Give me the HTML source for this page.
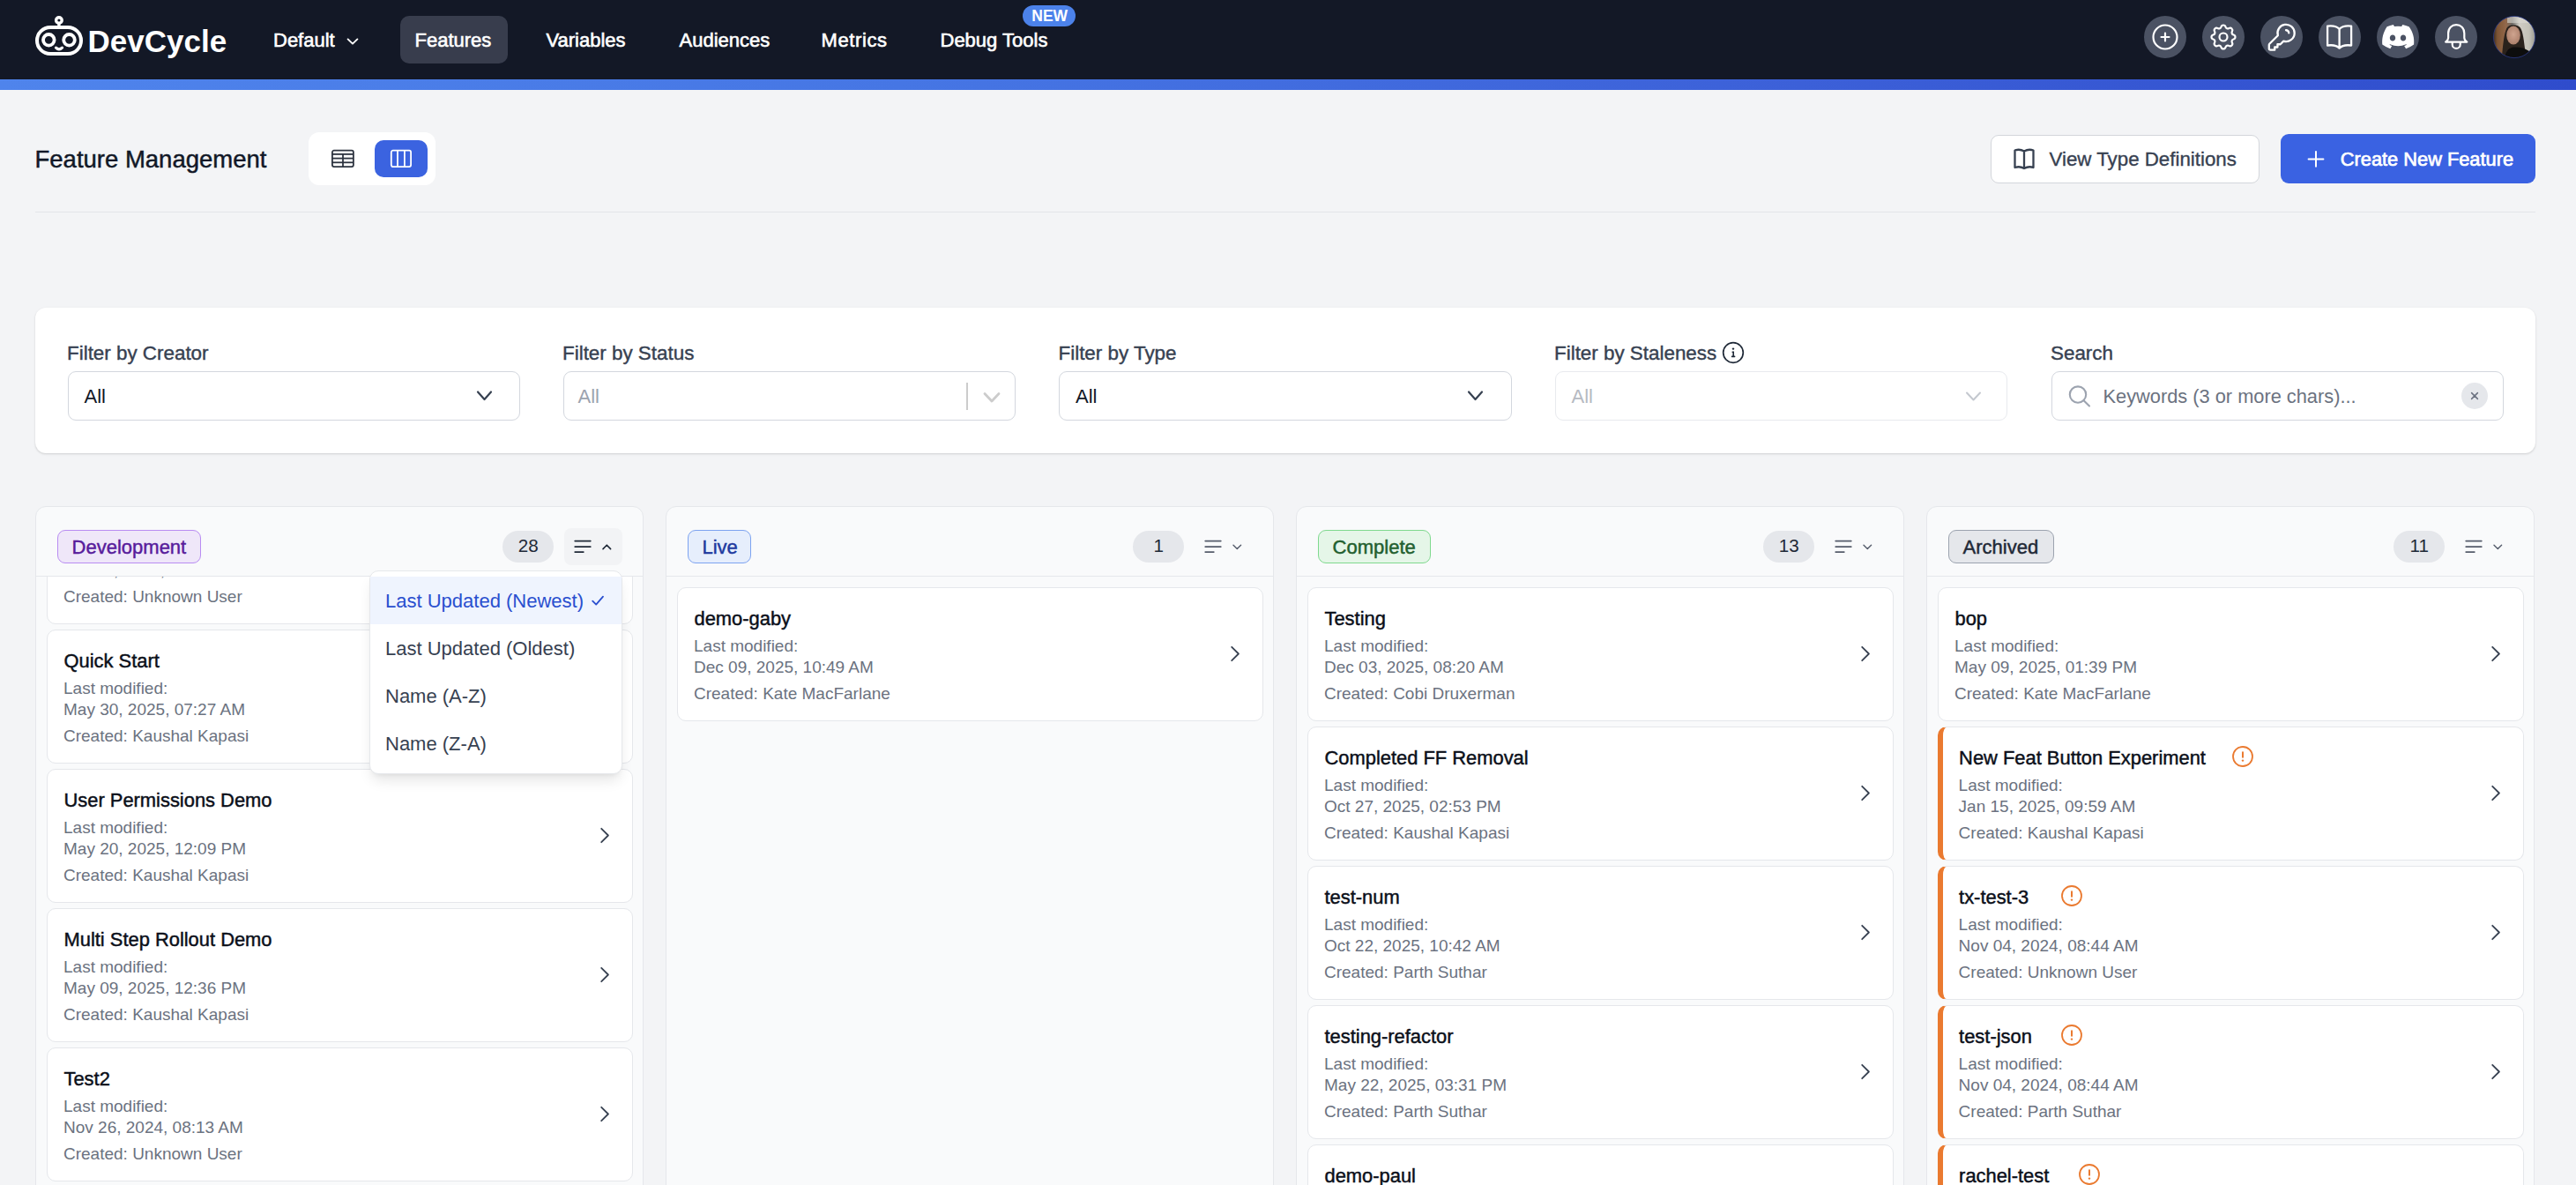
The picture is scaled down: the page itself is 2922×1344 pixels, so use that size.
<!DOCTYPE html>
<html><head><meta charset="utf-8"><title>Feature Management</title>
<style>
html,body{margin:0;padding:0;}
body{width:2922px;height:1344px;overflow:hidden;position:relative;background:#f3f4f6;font-family:"Liberation Sans", sans-serif;}
.t{position:absolute;white-space:nowrap;}
.r{position:absolute;}
svg.r{overflow:visible;}
</style></head><body>
<div class="r" style="left:0.00px;top:0.00px;width:2922.00px;height:90.00px;background:#131826;border-radius:0px;"></div>
<div class="r" style="left:0.00px;top:90.00px;width:2922.00px;height:12.00px;background:linear-gradient(90deg,#4f84ec 0%,#4676e4 35%,#3c60d8 70%,#2f4ccc 100%);border-radius:0px;"></div>
<svg class="r" style="left:0.00px;top:0.00px;" width="110" height="80" viewBox="0 0 110 80"><g fill="none" stroke="#fff" stroke-width="4">
<rect x="42" y="31" width="50" height="30" rx="15" ry="15"/>
<circle cx="55.3" cy="45.3" r="6.3" stroke-width="3.8"/>
<circle cx="78.5" cy="45.3" r="6.3" stroke-width="3.8"/>
<path d="M63.5 54.2 Q67 57.6 70.5 54.2" stroke-width="3.2" stroke-linecap="round"/>
<circle cx="66.9" cy="23" r="3.3" stroke-width="3.4"/>
<line x1="66.9" y1="26" x2="66.9" y2="31" stroke-width="3.4"/>
</g></svg>
<div class="t" style="left:99.50px;top:28.78px;font-size:35px;line-height:35px;font-weight:700;color:#fff;letter-spacing:0px;">DevCycle</div>
<div class="t" style="left:310.00px;top:34.63px;font-size:22px;line-height:22px;font-weight:400;color:#fff;letter-spacing:0px;-webkit-text-stroke:0.6px #fff;">Default</div>
<svg class="r" style="left:392.00px;top:40.00px;" width="16" height="14" viewBox="0 0 16 14"><path d="M2.6 4.4 L8 9.6 L13.4 4.4" fill="none" stroke="#fff" stroke-width="1.9" stroke-linecap="round" stroke-linejoin="round"/></svg>
<div class="r" style="left:454.00px;top:18.00px;width:122.00px;height:54.00px;background:#383d4d;border-radius:10px;"></div>
<div class="t" style="left:470.50px;top:34.63px;font-size:22px;line-height:22px;font-weight:400;color:#fff;letter-spacing:0px;-webkit-text-stroke:0.6px #fff;">Features</div>
<div class="t" style="left:619.50px;top:34.63px;font-size:22px;line-height:22px;font-weight:400;color:#fff;letter-spacing:0px;-webkit-text-stroke:0.6px #fff;">Variables</div>
<div class="t" style="left:770.50px;top:34.63px;font-size:22px;line-height:22px;font-weight:400;color:#fff;letter-spacing:0px;-webkit-text-stroke:0.6px #fff;">Audiences</div>
<div class="t" style="left:931.50px;top:34.63px;font-size:22px;line-height:22px;font-weight:400;color:#fff;letter-spacing:0.6px;-webkit-text-stroke:0.6px #fff;">Metrics</div>
<div class="t" style="left:1066.50px;top:34.63px;font-size:22px;line-height:22px;font-weight:400;color:#fff;letter-spacing:0px;-webkit-text-stroke:0.6px #fff;">Debug Tools</div>
<div class="r" style="left:1160.00px;top:6.00px;width:60.00px;height:24.00px;background:#4c82ea;border-radius:12px;"></div>
<div class="t" style="left:1170.30px;top:10.39px;font-size:17.5px;line-height:17.5px;font-weight:700;color:#fff;letter-spacing:0px;">NEW</div>
<div class="r" style="left:2432.00px;top:18.00px;width:48.00px;height:48.00px;background:#4b5263;border-radius:24px;"></div>
<div class="r" style="left:2498.00px;top:18.00px;width:48.00px;height:48.00px;background:#4b5263;border-radius:24px;"></div>
<div class="r" style="left:2564.00px;top:18.00px;width:48.00px;height:48.00px;background:#4b5263;border-radius:24px;"></div>
<div class="r" style="left:2630.00px;top:18.00px;width:48.00px;height:48.00px;background:#4b5263;border-radius:24px;"></div>
<div class="r" style="left:2696.00px;top:18.00px;width:48.00px;height:48.00px;background:#4b5263;border-radius:24px;"></div>
<div class="r" style="left:2762.00px;top:18.00px;width:48.00px;height:48.00px;background:#4b5263;border-radius:24px;"></div>
<svg class="r" style="left:2438.00px;top:24.00px" width="36" height="36" viewBox="0 0 24 24" fill="none" stroke="#fff" stroke-width="1.45" stroke-linecap="round" stroke-linejoin="round"><path d="M12 9v6m3-3H9m12 0a9 9 0 11-18 0 9 9 0 0118 0z"/></svg>
<svg class="r" style="left:2504.00px;top:24.00px" width="36" height="36" viewBox="0 0 24 24" fill="none" stroke="#fff" stroke-width="1.45" stroke-linecap="round" stroke-linejoin="round"><path d="M10.325 4.317c.426-1.756 2.924-1.756 3.35 0a1.724 1.724 0 002.573 1.066c1.543-.94 3.31.826 2.37 2.37a1.724 1.724 0 001.065 2.572c1.756.426 1.756 2.924 0 3.35a1.724 1.724 0 00-1.066 2.573c.94 1.543-.826 3.31-2.37 2.37a1.724 1.724 0 00-2.572 1.065c-.426 1.756-2.924 1.756-3.35 0a1.724 1.724 0 00-2.573-1.066c-1.543.94-3.31-.826-2.37-2.37a1.724 1.724 0 00-1.065-2.572c-1.756-.426-1.756-2.924 0-3.35a1.724 1.724 0 001.066-2.573c-.94-1.543.826-3.31 2.37-2.37.996.608 2.296.07 2.572-1.065zM15 12a3 3 0 11-6 0 3 3 0 016 0z"/></svg>
<svg class="r" style="left:2568.75px;top:22.75px" width="38.5" height="38.5" viewBox="0 0 24 24" fill="none" stroke="#fff" stroke-width="1.45" stroke-linecap="round" stroke-linejoin="round"><path d="M15 7a2 2 0 012 2m4 0a6 6 0 01-7.743 5.743L11 17H9v2H7v2H4a1 1 0 01-1-1v-2.586a1 1 0 01.293-.707l5.964-5.964A6 6 0 1121 9z"/></svg>
<svg class="r" style="left:2636.00px;top:26.00px;" width="36" height="32" viewBox="0 0 36 32"><path d="M4.1 3.6 C9.5 2.9 14.5 3.6 17.6 7 V28.6 C14.5 25.3 9.5 24.8 4.1 25.5 Z M17.6 7 C20.7 3.6 25.7 2.9 31.1 3.6 V25.5 C25.7 24.8 20.7 25.3 17.6 28.6" fill="none" stroke="#fff" stroke-width="2.3" stroke-linejoin="round"/></svg>
<svg class="r" style="left:2702.00px;top:28.00px;" width="36" height="28" viewBox="0 0 36 28"><path fill="#fff" d="M30.5 2.3A29.7 29.7 0 0 0 23.2 0c-.3.6-.7 1.4-1 2a27.6 27.6 0 0 0-8.3 0c-.3-.6-.7-1.4-1-2a29.6 29.6 0 0 0-7.3 2.3C1 9.2-.3 16 .3 22.6a29.9 29.9 0 0 0 9 4.6c.7-1 1.4-2 2-3.1a19.4 19.4 0 0 1-2.9-1.4l.7-.5a21.3 21.3 0 0 0 18.2 0l.7.5c-.9.5-1.9 1-2.9 1.4.6 1.1 1.3 2.1 2 3.1a29.8 29.8 0 0 0 9-4.6c.8-7.7-1.2-14.4-5.5-20.3zM12 18.6c-1.8 0-3.2-1.6-3.2-3.6s1.4-3.6 3.2-3.6 3.3 1.6 3.2 3.6c0 2-1.4 3.6-3.2 3.6zm12 0c-1.8 0-3.2-1.6-3.2-3.6s1.4-3.6 3.2-3.6 3.3 1.6 3.2 3.6c0 2-1.4 3.6-3.2 3.6z"/></svg>
<svg class="r" style="left:2770.00px;top:26.00px;" width="32" height="34" viewBox="0 0 32 34"><path d="M7.1 17 V11.8 C7.1 5.9 11.1 2.1 16.2 2.1 C21.3 2.1 25.3 5.9 25.3 11.8 V17 C25.3 19.2 26.8 20.3 28.3 21.6 H4.1 C5.6 20.3 7.1 19.2 7.1 17 Z M11.7 22 V24.4 A4.5 4.5 0 0 0 20.7 24.4 V22" fill="none" stroke="#fff" stroke-width="2.2" stroke-linejoin="round"/></svg>
<svg class="r" style="left:2828.00px;top:18.00px;" width="48" height="48" viewBox="0 0 48 48"><defs><clipPath id="avc"><circle cx="24" cy="24" r="23.6"/></clipPath>
<linearGradient id="avbg" x1="0" y1="0" x2="1" y2="0"><stop offset="0" stop-color="#3a2c22"/><stop offset="0.1" stop-color="#7d5434"/><stop offset="0.3" stop-color="#93684a"/><stop offset="0.45" stop-color="#6d6a66"/><stop offset="0.62" stop-color="#cfccc4"/><stop offset="0.85" stop-color="#c4c2b8"/><stop offset="1" stop-color="#9c9a90"/></linearGradient>
<radialGradient id="avface" cx="0.5" cy="0.45" r="0.6"><stop offset="0" stop-color="#cfa48f"/><stop offset="1" stop-color="#a97d68"/></radialGradient></defs>
<filter id="avblur"><feGaussianBlur stdDeviation="0.7"/></filter><g clip-path="url(#avc)"><g filter="url(#avblur)"><rect width="48" height="48" fill="url(#avbg)"/>
<rect x="16" y="-2" width="30" height="10" fill="#dcdad3" opacity="0.6"/>
<path d="M10 48 C11 32 13 16 16.5 12.5 C20 9.5 27 9.5 30.5 13 C34 17 35 30 36.5 40 L39 48 Z" fill="#2a211c"/>
<ellipse cx="23" cy="22" rx="7.8" ry="10.5" fill="url(#avface)"/>
<path d="M13 48 C14 40 18 36 24 35.5 C32 35 40 38 46 44 L46 48 Z" fill="#0c0c0b"/></g></g>
<circle cx="24" cy="24" r="23.6" fill="none" stroke="#2b3a86" stroke-width="0.8"/></svg>
<div class="t" style="left:39.50px;top:166.64px;font-size:27.5px;line-height:27.5px;font-weight:400;color:#111827;letter-spacing:0px;-webkit-text-stroke:0.45px #111827;">Feature Management</div>
<div class="r" style="left:350.00px;top:150.00px;width:144.00px;height:60.00px;background:#fff;border-radius:12px;"></div>
<div class="r" style="left:425.00px;top:159.00px;width:60.00px;height:42.00px;background:#3b63e0;border-radius:10px;"></div>
<svg class="r" style="left:370.00px;top:165.00px;" width="36" height="30" viewBox="0 0 36 30"><g fill="none" stroke="#2d3440" stroke-width="1.8"><rect x="6.9" y="5.7" width="24" height="18.4" rx="2"/><line x1="6.9" y1="9.9" x2="30.9" y2="9.9"/><line x1="6.9" y1="14.6" x2="30.9" y2="14.6"/><line x1="6.9" y1="19.3" x2="30.9" y2="19.3"/><line x1="19" y1="9.9" x2="19" y2="24.1"/></g></svg>
<svg class="r" style="left:436.00px;top:165.00px;" width="36" height="30" viewBox="0 0 36 30"><g fill="none" stroke="#fff" stroke-width="1.8"><rect x="7.8" y="5.7" width="22.3" height="18.4" rx="2"/><line x1="15" y1="5.7" x2="15" y2="24.1"/><line x1="22.9" y1="5.7" x2="22.9" y2="24.1"/></g></svg>
<div class="r" style="left:40.00px;top:239.50px;width:2836.00px;height:1.50px;background:#e3e5e9;border-radius:0px;"></div>
<div class="r" style="left:2257.50px;top:152.50px;width:305.00px;height:55.00px;background:#fff;border-radius:9px;border:1.5px solid #d3d6db;box-sizing:border-box;"></div>
<svg class="r" style="left:2282.00px;top:166.00px;" width="30" height="28" viewBox="0 0 30 28"><path d="M3.5 4.5 C7 3.3 10.5 3.5 14 5.5 V25 C10.5 23 7 22.8 3.5 24 Z M14 5.5 C17.5 3.5 21 3.3 24.5 4.5 V24 C21 22.8 17.5 23 14 25" fill="none" stroke="#374151" stroke-width="2.3" stroke-linejoin="round"/></svg>
<div class="t" style="left:2324.50px;top:169.58px;font-size:22.3px;line-height:22.3px;font-weight:400;color:#374151;letter-spacing:0px;-webkit-text-stroke:0.35px #374151;">View Type Definitions</div>
<div class="r" style="left:2587.00px;top:152.00px;width:289.00px;height:56.00px;background:#3a62e2;border-radius:9px;"></div>
<svg class="r" style="left:2614.00px;top:167.00px;" width="26" height="26" viewBox="0 0 26 26"><path d="M13 5 V21.8 M4.6 13.4 H21.4" stroke="#fff" stroke-width="2" stroke-linecap="round"/></svg>
<div class="t" style="left:2654.80px;top:170.00px;font-size:21.8px;line-height:21.8px;font-weight:400;color:#fff;letter-spacing:0px;-webkit-text-stroke:0.7px #fff;">Create New Feature</div>
<div class="r" style="left:40.00px;top:349.00px;width:2836.00px;height:165.00px;background:#fff;border-radius:12px;box-shadow:0 1px 3px rgba(0,0,0,0.10),0 1px 2px rgba(0,0,0,0.06);"></div>
<div class="t" style="left:76.00px;top:389.80px;font-size:22.4px;line-height:22.4px;font-weight:400;color:#374151;letter-spacing:0px;-webkit-text-stroke:0.4px #374151;">Filter by Creator</div>
<div class="t" style="left:638.00px;top:389.80px;font-size:22.4px;line-height:22.4px;font-weight:400;color:#374151;letter-spacing:0px;-webkit-text-stroke:0.4px #374151;">Filter by Status</div>
<div class="t" style="left:1200.50px;top:389.80px;font-size:22.4px;line-height:22.4px;font-weight:400;color:#374151;letter-spacing:0px;-webkit-text-stroke:0.4px #374151;">Filter by Type</div>
<div class="t" style="left:1763.00px;top:389.80px;font-size:22.4px;line-height:22.4px;font-weight:400;color:#374151;letter-spacing:0px;-webkit-text-stroke:0.4px #374151;">Filter by Staleness</div>
<div class="t" style="left:2326.00px;top:389.80px;font-size:22.4px;line-height:22.4px;font-weight:400;color:#374151;letter-spacing:0px;-webkit-text-stroke:0.4px #374151;">Search</div>
<div class="r" style="left:76.50px;top:421.00px;width:513.50px;height:55.50px;background:#fff;border-radius:9px;border:1.5px solid #d3d7de;box-sizing:border-box;"></div>
<div class="t" style="left:95.50px;top:438.63px;font-size:22px;line-height:22px;font-weight:400;color:#111827;letter-spacing:0px;">All</div>
<svg class="r" style="left:538.50px;top:441.00px;" width="21" height="16" viewBox="0 0 21 16"><path d="M3 3.5 L10.5 12 L18 3.5" fill="none" stroke="#374151" stroke-width="2.2" stroke-linecap="round" stroke-linejoin="round"/></svg>
<div class="r" style="left:638.50px;top:421.00px;width:513.50px;height:55.50px;background:#fff;border-radius:9px;border:1.5px solid #d3d7de;box-sizing:border-box;"></div>
<div class="t" style="left:655.50px;top:439.13px;font-size:22px;line-height:22px;font-weight:400;color:#9ca3af;letter-spacing:0px;">All</div>
<div class="r" style="left:1095.50px;top:434.00px;width:2.00px;height:31.00px;background:#cccccc;border-radius:0px;"></div>
<svg class="r" style="left:1114.00px;top:443.00px;" width="22" height="16" viewBox="0 0 22 16"><path d="M3 3.5 L11.0 12 L19 3.5" fill="none" stroke="#cccccc" stroke-width="2.8" stroke-linecap="round" stroke-linejoin="round"/></svg>
<div class="r" style="left:1201.00px;top:421.00px;width:513.50px;height:55.50px;background:#fff;border-radius:9px;border:1.5px solid #d3d7de;box-sizing:border-box;"></div>
<div class="t" style="left:1220.00px;top:438.63px;font-size:22px;line-height:22px;font-weight:400;color:#111827;letter-spacing:0px;">All</div>
<svg class="r" style="left:1663.00px;top:441.00px;" width="21" height="16" viewBox="0 0 21 16"><path d="M3 3.5 L10.5 12 L18 3.5" fill="none" stroke="#374151" stroke-width="2.2" stroke-linecap="round" stroke-linejoin="round"/></svg>
<div class="r" style="left:1763.50px;top:421.00px;width:513.50px;height:55.50px;background:#fff;border-radius:9px;border:1.5px solid #e8eaee;box-sizing:border-box;"></div>
<div class="t" style="left:1782.50px;top:439.13px;font-size:22px;line-height:22px;font-weight:400;color:#b6bac2;letter-spacing:0px;">All</div>
<svg class="r" style="left:2227.50px;top:441.50px;" width="21" height="15.5" viewBox="0 0 21 15.5"><path d="M3 3.5 L10.5 11.5 L18 3.5" fill="none" stroke="#c4c8cf" stroke-width="2" stroke-linecap="round" stroke-linejoin="round"/></svg>
<svg class="r" style="left:1952.00px;top:386.00px;" width="28" height="28" viewBox="0 0 28 28"><g fill="none" stroke="#1f2937" stroke-width="1.7"><circle cx="14" cy="14" r="11.3"/></g><path d="M13.2 13.2 H14.2 V18.4 M12.6 18.4 H15.6" fill="none" stroke="#1f2937" stroke-width="1.6" stroke-linecap="round"/><circle cx="14" cy="9.6" r="1.2" fill="#1f2937"/></svg>
<div class="r" style="left:2326.50px;top:421.00px;width:513.50px;height:55.50px;background:#fff;border-radius:9px;border:1.5px solid #d3d7de;box-sizing:border-box;"></div>
<svg class="r" style="left:2344.00px;top:435.00px;" width="30" height="30" viewBox="0 0 30 30"><g fill="none" stroke="#9ca3af" stroke-width="2.1" stroke-linecap="round"><circle cx="13" cy="12.6" r="9.2"/><line x1="19.6" y1="19.2" x2="26" y2="25.5"/></g></svg>
<div class="t" style="left:2385.50px;top:438.80px;font-size:21.8px;line-height:21.8px;font-weight:400;color:#6b7280;letter-spacing:0px;">Keywords (3 or more chars)...</div>
<div class="r" style="left:2792.00px;top:434.00px;width:30.00px;height:30.00px;background:#e5e7eb;border-radius:15px;"></div>
<svg class="r" style="left:2799.00px;top:441.00px;" width="16" height="16" viewBox="0 0 16 16"><path d="M4.6 4.6 L11.4 11.4 M11.4 4.6 L4.6 11.4" stroke="#6b7280" stroke-width="1.5" stroke-linecap="round"/></svg>
<div class="r" style="left:40.40px;top:573.50px;width:690.00px;height:826.50px;background:#f9fafb;border-radius:12px;border:1.5px solid #e5e7eb;box-sizing:border-box;"></div>
<div class="r" style="left:40.40px;top:652.50px;width:690.00px;height:1.50px;background:#e5e7eb;border-radius:0px;"></div>
<div class="r" style="left:65.30px;top:601.00px;width:163.10px;height:37.50px;background:#efe7f9;border-radius:9px;border:1.5px solid #b98cf2;box-sizing:border-box;"></div>
<div class="t" style="left:81.60px;top:610.13px;font-size:22px;line-height:22px;font-weight:400;color:#581c9c;letter-spacing:0px;-webkit-text-stroke:0.45px #581c9c;">Development</div>
<div class="r" style="left:570.00px;top:602.00px;width:58.00px;height:36.00px;background:#e5e7eb;border-radius:18px;"></div>
<div class="t" style="left:599.30px;top:609.10px;font-size:20.6px;line-height:20.6px;font-weight:400;color:#1f2937;letter-spacing:0px;transform:translateX(-50%);">28</div>
<div class="r" style="left:640.00px;top:599.00px;width:66.00px;height:42.00px;background:#f2f3f5;border-radius:8px;"></div>
<svg class="r" style="left:649.00px;top:609.00px;" width="24" height="22" viewBox="0 0 24 22"><g stroke="#1f2937" stroke-width="1.75" stroke-linecap="round"><line x1="3.2" y1="4.5" x2="20.8" y2="4.5"/><line x1="3.2" y1="11.1" x2="20.8" y2="11.1"/><line x1="3.2" y1="17" x2="12.8" y2="17"/></g></svg>
<svg class="r" style="left:681.00px;top:613.00px;" width="14" height="14" viewBox="0 0 14 14"><path d="M3 9.6 L7.3 5.2 L11.6 9.6" fill="none" stroke="#1f2937" stroke-width="1.6" stroke-linecap="round" stroke-linejoin="round"/></svg>
<div class="r" style="left:755.40px;top:573.50px;width:690.00px;height:826.50px;background:#f9fafb;border-radius:12px;border:1.5px solid #e5e7eb;box-sizing:border-box;"></div>
<div class="r" style="left:755.40px;top:652.50px;width:690.00px;height:1.50px;background:#e5e7eb;border-radius:0px;"></div>
<div class="r" style="left:780.20px;top:601.00px;width:71.60px;height:37.50px;background:#e6eefc;border-radius:9px;border:1.5px solid #7da3f0;box-sizing:border-box;"></div>
<div class="t" style="left:796.50px;top:610.13px;font-size:22px;line-height:22px;font-weight:400;color:#1e3a9f;letter-spacing:0px;-webkit-text-stroke:0.45px #1e3a9f;">Live</div>
<div class="r" style="left:1285.00px;top:602.00px;width:58.00px;height:36.00px;background:#e5e7eb;border-radius:18px;"></div>
<div class="t" style="left:1314.30px;top:609.10px;font-size:20.6px;line-height:20.6px;font-weight:400;color:#1f2937;letter-spacing:0px;transform:translateX(-50%);">1</div>
<svg class="r" style="left:1364.00px;top:609.00px;" width="24" height="22" viewBox="0 0 24 22"><g stroke="#555c6b" stroke-width="1.75" stroke-linecap="round"><line x1="3.2" y1="4.5" x2="20.8" y2="4.5"/><line x1="3.2" y1="11.1" x2="20.8" y2="11.1"/><line x1="3.2" y1="17" x2="12.8" y2="17"/></g></svg>
<svg class="r" style="left:1396.00px;top:613.00px;" width="14" height="14" viewBox="0 0 14 14"><path d="M3 5.2 L7.3 9.4 L11.6 5.2" fill="none" stroke="#555c6b" stroke-width="1.4" stroke-linecap="round" stroke-linejoin="round"/></svg>
<div class="r" style="left:1470.40px;top:573.50px;width:690.00px;height:826.50px;background:#f9fafb;border-radius:12px;border:1.5px solid #e5e7eb;box-sizing:border-box;"></div>
<div class="r" style="left:1470.40px;top:652.50px;width:690.00px;height:1.50px;background:#e5e7eb;border-radius:0px;"></div>
<div class="r" style="left:1495.30px;top:601.00px;width:127.50px;height:37.50px;background:#e5f6e8;border-radius:9px;border:1.5px solid #7fd98e;box-sizing:border-box;"></div>
<div class="t" style="left:1511.60px;top:610.13px;font-size:22px;line-height:22px;font-weight:400;color:#22602f;letter-spacing:0px;-webkit-text-stroke:0.45px #22602f;">Complete</div>
<div class="r" style="left:2000.00px;top:602.00px;width:58.00px;height:36.00px;background:#e5e7eb;border-radius:18px;"></div>
<div class="t" style="left:2029.30px;top:609.10px;font-size:20.6px;line-height:20.6px;font-weight:400;color:#1f2937;letter-spacing:0px;transform:translateX(-50%);">13</div>
<svg class="r" style="left:2079.00px;top:609.00px;" width="24" height="22" viewBox="0 0 24 22"><g stroke="#555c6b" stroke-width="1.75" stroke-linecap="round"><line x1="3.2" y1="4.5" x2="20.8" y2="4.5"/><line x1="3.2" y1="11.1" x2="20.8" y2="11.1"/><line x1="3.2" y1="17" x2="12.8" y2="17"/></g></svg>
<svg class="r" style="left:2111.00px;top:613.00px;" width="14" height="14" viewBox="0 0 14 14"><path d="M3 5.2 L7.3 9.4 L11.6 5.2" fill="none" stroke="#555c6b" stroke-width="1.4" stroke-linecap="round" stroke-linejoin="round"/></svg>
<div class="r" style="left:2185.40px;top:573.50px;width:690.00px;height:826.50px;background:#f9fafb;border-radius:12px;border:1.5px solid #e5e7eb;box-sizing:border-box;"></div>
<div class="r" style="left:2185.40px;top:652.50px;width:690.00px;height:1.50px;background:#e5e7eb;border-radius:0px;"></div>
<div class="r" style="left:2210.30px;top:601.00px;width:119.40px;height:37.50px;background:#e5e7eb;border-radius:9px;border:1.5px solid #9ca3af;box-sizing:border-box;"></div>
<div class="t" style="left:2226.60px;top:610.13px;font-size:22px;line-height:22px;font-weight:400;color:#1f2937;letter-spacing:0px;-webkit-text-stroke:0.45px #1f2937;">Archived</div>
<div class="r" style="left:2715.00px;top:602.00px;width:58.00px;height:36.00px;background:#e5e7eb;border-radius:18px;"></div>
<div class="t" style="left:2744.30px;top:609.10px;font-size:20.6px;line-height:20.6px;font-weight:400;color:#1f2937;letter-spacing:0px;transform:translateX(-50%);">11</div>
<svg class="r" style="left:2794.00px;top:609.00px;" width="24" height="22" viewBox="0 0 24 22"><g stroke="#555c6b" stroke-width="1.75" stroke-linecap="round"><line x1="3.2" y1="4.5" x2="20.8" y2="4.5"/><line x1="3.2" y1="11.1" x2="20.8" y2="11.1"/><line x1="3.2" y1="17" x2="12.8" y2="17"/></g></svg>
<svg class="r" style="left:2826.00px;top:613.00px;" width="14" height="14" viewBox="0 0 14 14"><path d="M3 5.2 L7.3 9.4 L11.6 5.2" fill="none" stroke="#555c6b" stroke-width="1.4" stroke-linecap="round" stroke-linejoin="round"/></svg>
<div class="r" style="left:0;top:653.5px;width:2922px;height:690.5px;overflow:hidden"><div class="r" style="left:0;top:-653.5px;width:2922px;height:1344px">
<div class="r" style="left:52.90px;top:556.20px;width:665.00px;height:151.50px;background:#fff;border-radius:10px;border:1.5px solid #e5e7eb;box-sizing:border-box;"></div>
<div class="t" style="left:72.50px;top:580.51px;font-size:21.9px;line-height:21.9px;font-weight:400;color:#0b0f19;letter-spacing:0px;-webkit-text-stroke:0.45px #0b0f19;">Onboarding Flow</div>
<div class="t" style="left:72.00px;top:612.84px;font-size:19.0px;line-height:19.0px;font-weight:400;color:#6b7280;letter-spacing:0px;">Last modified:</div>
<div class="t" style="left:72.00px;top:636.94px;font-size:19.0px;line-height:19.0px;font-weight:400;color:#6b7280;letter-spacing:0px;">Jun 02, 2025, 09:14 AM</div>
<div class="t" style="left:72.00px;top:667.24px;font-size:19.0px;line-height:19.0px;font-weight:400;color:#6b7280;letter-spacing:0px;">Created: Unknown User</div>
<svg class="r" style="left:678.30px;top:621.00px;" width="18" height="21" viewBox="0 0 18 21"><path d="M4.2 2.8 L11.9 10.5 L4.2 18.2" fill="none" stroke="#374151" stroke-width="1.8" stroke-linecap="round" stroke-linejoin="round"/></svg>
<div class="r" style="left:52.90px;top:714.20px;width:665.00px;height:151.50px;background:#fff;border-radius:10px;border:1.5px solid #e5e7eb;box-sizing:border-box;"></div>
<div class="t" style="left:72.50px;top:738.51px;font-size:21.9px;line-height:21.9px;font-weight:400;color:#0b0f19;letter-spacing:0px;-webkit-text-stroke:0.45px #0b0f19;">Quick Start</div>
<div class="t" style="left:72.00px;top:770.84px;font-size:19.0px;line-height:19.0px;font-weight:400;color:#6b7280;letter-spacing:0px;">Last modified:</div>
<div class="t" style="left:72.00px;top:794.94px;font-size:19.0px;line-height:19.0px;font-weight:400;color:#6b7280;letter-spacing:0px;">May 30, 2025, 07:27 AM</div>
<div class="t" style="left:72.00px;top:825.24px;font-size:19.0px;line-height:19.0px;font-weight:400;color:#6b7280;letter-spacing:0px;">Created: Kaushal Kapasi</div>
<svg class="r" style="left:678.30px;top:779.00px;" width="18" height="21" viewBox="0 0 18 21"><path d="M4.2 2.8 L11.9 10.5 L4.2 18.2" fill="none" stroke="#374151" stroke-width="1.8" stroke-linecap="round" stroke-linejoin="round"/></svg>
<div class="r" style="left:52.90px;top:872.20px;width:665.00px;height:151.50px;background:#fff;border-radius:10px;border:1.5px solid #e5e7eb;box-sizing:border-box;"></div>
<div class="t" style="left:72.50px;top:896.51px;font-size:21.9px;line-height:21.9px;font-weight:400;color:#0b0f19;letter-spacing:0px;-webkit-text-stroke:0.45px #0b0f19;">User Permissions Demo</div>
<div class="t" style="left:72.00px;top:928.84px;font-size:19.0px;line-height:19.0px;font-weight:400;color:#6b7280;letter-spacing:0px;">Last modified:</div>
<div class="t" style="left:72.00px;top:952.94px;font-size:19.0px;line-height:19.0px;font-weight:400;color:#6b7280;letter-spacing:0px;">May 20, 2025, 12:09 PM</div>
<div class="t" style="left:72.00px;top:983.24px;font-size:19.0px;line-height:19.0px;font-weight:400;color:#6b7280;letter-spacing:0px;">Created: Kaushal Kapasi</div>
<svg class="r" style="left:678.30px;top:937.00px;" width="18" height="21" viewBox="0 0 18 21"><path d="M4.2 2.8 L11.9 10.5 L4.2 18.2" fill="none" stroke="#374151" stroke-width="1.8" stroke-linecap="round" stroke-linejoin="round"/></svg>
<div class="r" style="left:52.90px;top:1030.20px;width:665.00px;height:151.50px;background:#fff;border-radius:10px;border:1.5px solid #e5e7eb;box-sizing:border-box;"></div>
<div class="t" style="left:72.50px;top:1054.51px;font-size:21.9px;line-height:21.9px;font-weight:400;color:#0b0f19;letter-spacing:0px;-webkit-text-stroke:0.45px #0b0f19;">Multi Step Rollout Demo</div>
<div class="t" style="left:72.00px;top:1086.84px;font-size:19.0px;line-height:19.0px;font-weight:400;color:#6b7280;letter-spacing:0px;">Last modified:</div>
<div class="t" style="left:72.00px;top:1110.93px;font-size:19.0px;line-height:19.0px;font-weight:400;color:#6b7280;letter-spacing:0px;">May 09, 2025, 12:36 PM</div>
<div class="t" style="left:72.00px;top:1141.24px;font-size:19.0px;line-height:19.0px;font-weight:400;color:#6b7280;letter-spacing:0px;">Created: Kaushal Kapasi</div>
<svg class="r" style="left:678.30px;top:1095.00px;" width="18" height="21" viewBox="0 0 18 21"><path d="M4.2 2.8 L11.9 10.5 L4.2 18.2" fill="none" stroke="#374151" stroke-width="1.8" stroke-linecap="round" stroke-linejoin="round"/></svg>
<div class="r" style="left:52.90px;top:1188.20px;width:665.00px;height:151.50px;background:#fff;border-radius:10px;border:1.5px solid #e5e7eb;box-sizing:border-box;"></div>
<div class="t" style="left:72.50px;top:1212.51px;font-size:21.9px;line-height:21.9px;font-weight:400;color:#0b0f19;letter-spacing:0px;-webkit-text-stroke:0.45px #0b0f19;">Test2</div>
<div class="t" style="left:72.00px;top:1244.84px;font-size:19.0px;line-height:19.0px;font-weight:400;color:#6b7280;letter-spacing:0px;">Last modified:</div>
<div class="t" style="left:72.00px;top:1268.93px;font-size:19.0px;line-height:19.0px;font-weight:400;color:#6b7280;letter-spacing:0px;">Nov 26, 2024, 08:13 AM</div>
<div class="t" style="left:72.00px;top:1299.24px;font-size:19.0px;line-height:19.0px;font-weight:400;color:#6b7280;letter-spacing:0px;">Created: Unknown User</div>
<svg class="r" style="left:678.30px;top:1253.00px;" width="18" height="21" viewBox="0 0 18 21"><path d="M4.2 2.8 L11.9 10.5 L4.2 18.2" fill="none" stroke="#374151" stroke-width="1.8" stroke-linecap="round" stroke-linejoin="round"/></svg>
</div></div>
<div class="r" style="left:0;top:653.5px;width:2922px;height:690.5px;overflow:hidden"><div class="r" style="left:0;top:-653.5px;width:2922px;height:1344px">
<div class="r" style="left:767.90px;top:666.20px;width:665.00px;height:151.50px;background:#fff;border-radius:10px;border:1.5px solid #e5e7eb;box-sizing:border-box;"></div>
<div class="t" style="left:787.50px;top:690.51px;font-size:21.9px;line-height:21.9px;font-weight:400;color:#0b0f19;letter-spacing:0px;-webkit-text-stroke:0.45px #0b0f19;">demo-gaby</div>
<div class="t" style="left:787.00px;top:722.84px;font-size:19.0px;line-height:19.0px;font-weight:400;color:#6b7280;letter-spacing:0px;">Last modified:</div>
<div class="t" style="left:787.00px;top:746.94px;font-size:19.0px;line-height:19.0px;font-weight:400;color:#6b7280;letter-spacing:0px;">Dec 09, 2025, 10:49 AM</div>
<div class="t" style="left:787.00px;top:777.24px;font-size:19.0px;line-height:19.0px;font-weight:400;color:#6b7280;letter-spacing:0px;">Created: Kate MacFarlane</div>
<svg class="r" style="left:1393.30px;top:731.00px;" width="18" height="21" viewBox="0 0 18 21"><path d="M4.2 2.8 L11.9 10.5 L4.2 18.2" fill="none" stroke="#374151" stroke-width="1.8" stroke-linecap="round" stroke-linejoin="round"/></svg>
</div></div>
<div class="r" style="left:0;top:653.5px;width:2922px;height:690.5px;overflow:hidden"><div class="r" style="left:0;top:-653.5px;width:2922px;height:1344px">
<div class="r" style="left:1482.90px;top:666.20px;width:665.00px;height:151.50px;background:#fff;border-radius:10px;border:1.5px solid #e5e7eb;box-sizing:border-box;"></div>
<div class="t" style="left:1502.50px;top:690.51px;font-size:21.9px;line-height:21.9px;font-weight:400;color:#0b0f19;letter-spacing:0px;-webkit-text-stroke:0.45px #0b0f19;">Testing</div>
<div class="t" style="left:1502.00px;top:722.84px;font-size:19.0px;line-height:19.0px;font-weight:400;color:#6b7280;letter-spacing:0px;">Last modified:</div>
<div class="t" style="left:1502.00px;top:746.94px;font-size:19.0px;line-height:19.0px;font-weight:400;color:#6b7280;letter-spacing:0px;">Dec 03, 2025, 08:20 AM</div>
<div class="t" style="left:1502.00px;top:777.24px;font-size:19.0px;line-height:19.0px;font-weight:400;color:#6b7280;letter-spacing:0px;">Created: Cobi Druxerman</div>
<svg class="r" style="left:2108.30px;top:731.00px;" width="18" height="21" viewBox="0 0 18 21"><path d="M4.2 2.8 L11.9 10.5 L4.2 18.2" fill="none" stroke="#374151" stroke-width="1.8" stroke-linecap="round" stroke-linejoin="round"/></svg>
<div class="r" style="left:1482.90px;top:824.20px;width:665.00px;height:151.50px;background:#fff;border-radius:10px;border:1.5px solid #e5e7eb;box-sizing:border-box;"></div>
<div class="t" style="left:1502.50px;top:848.51px;font-size:21.9px;line-height:21.9px;font-weight:400;color:#0b0f19;letter-spacing:0px;-webkit-text-stroke:0.45px #0b0f19;">Completed FF Removal</div>
<div class="t" style="left:1502.00px;top:880.84px;font-size:19.0px;line-height:19.0px;font-weight:400;color:#6b7280;letter-spacing:0px;">Last modified:</div>
<div class="t" style="left:1502.00px;top:904.94px;font-size:19.0px;line-height:19.0px;font-weight:400;color:#6b7280;letter-spacing:0px;">Oct 27, 2025, 02:53 PM</div>
<div class="t" style="left:1502.00px;top:935.24px;font-size:19.0px;line-height:19.0px;font-weight:400;color:#6b7280;letter-spacing:0px;">Created: Kaushal Kapasi</div>
<svg class="r" style="left:2108.30px;top:889.00px;" width="18" height="21" viewBox="0 0 18 21"><path d="M4.2 2.8 L11.9 10.5 L4.2 18.2" fill="none" stroke="#374151" stroke-width="1.8" stroke-linecap="round" stroke-linejoin="round"/></svg>
<div class="r" style="left:1482.90px;top:982.20px;width:665.00px;height:151.50px;background:#fff;border-radius:10px;border:1.5px solid #e5e7eb;box-sizing:border-box;"></div>
<div class="t" style="left:1502.50px;top:1006.51px;font-size:21.9px;line-height:21.9px;font-weight:400;color:#0b0f19;letter-spacing:0px;-webkit-text-stroke:0.45px #0b0f19;">test-num</div>
<div class="t" style="left:1502.00px;top:1038.84px;font-size:19.0px;line-height:19.0px;font-weight:400;color:#6b7280;letter-spacing:0px;">Last modified:</div>
<div class="t" style="left:1502.00px;top:1062.93px;font-size:19.0px;line-height:19.0px;font-weight:400;color:#6b7280;letter-spacing:0px;">Oct 22, 2025, 10:42 AM</div>
<div class="t" style="left:1502.00px;top:1093.24px;font-size:19.0px;line-height:19.0px;font-weight:400;color:#6b7280;letter-spacing:0px;">Created: Parth Suthar</div>
<svg class="r" style="left:2108.30px;top:1047.00px;" width="18" height="21" viewBox="0 0 18 21"><path d="M4.2 2.8 L11.9 10.5 L4.2 18.2" fill="none" stroke="#374151" stroke-width="1.8" stroke-linecap="round" stroke-linejoin="round"/></svg>
<div class="r" style="left:1482.90px;top:1140.20px;width:665.00px;height:151.50px;background:#fff;border-radius:10px;border:1.5px solid #e5e7eb;box-sizing:border-box;"></div>
<div class="t" style="left:1502.50px;top:1164.51px;font-size:21.9px;line-height:21.9px;font-weight:400;color:#0b0f19;letter-spacing:0px;-webkit-text-stroke:0.45px #0b0f19;">testing-refactor</div>
<div class="t" style="left:1502.00px;top:1196.84px;font-size:19.0px;line-height:19.0px;font-weight:400;color:#6b7280;letter-spacing:0px;">Last modified:</div>
<div class="t" style="left:1502.00px;top:1220.93px;font-size:19.0px;line-height:19.0px;font-weight:400;color:#6b7280;letter-spacing:0px;">May 22, 2025, 03:31 PM</div>
<div class="t" style="left:1502.00px;top:1251.24px;font-size:19.0px;line-height:19.0px;font-weight:400;color:#6b7280;letter-spacing:0px;">Created: Parth Suthar</div>
<svg class="r" style="left:2108.30px;top:1205.00px;" width="18" height="21" viewBox="0 0 18 21"><path d="M4.2 2.8 L11.9 10.5 L4.2 18.2" fill="none" stroke="#374151" stroke-width="1.8" stroke-linecap="round" stroke-linejoin="round"/></svg>
<div class="r" style="left:1482.90px;top:1298.20px;width:665.00px;height:151.50px;background:#fff;border-radius:10px;border:1.5px solid #e5e7eb;box-sizing:border-box;"></div>
<div class="t" style="left:1502.50px;top:1322.51px;font-size:21.9px;line-height:21.9px;font-weight:400;color:#0b0f19;letter-spacing:0px;-webkit-text-stroke:0.45px #0b0f19;">demo-paul</div>
<div class="t" style="left:1502.00px;top:1354.84px;font-size:19.0px;line-height:19.0px;font-weight:400;color:#6b7280;letter-spacing:0px;">Last modified:</div>
<div class="t" style="left:1502.00px;top:1378.93px;font-size:19.0px;line-height:19.0px;font-weight:400;color:#6b7280;letter-spacing:0px;">May 20, 2025, 11:02 AM</div>
<div class="t" style="left:1502.00px;top:1409.24px;font-size:19.0px;line-height:19.0px;font-weight:400;color:#6b7280;letter-spacing:0px;">Created: Parth Suthar</div>
<svg class="r" style="left:2108.30px;top:1363.00px;" width="18" height="21" viewBox="0 0 18 21"><path d="M4.2 2.8 L11.9 10.5 L4.2 18.2" fill="none" stroke="#374151" stroke-width="1.8" stroke-linecap="round" stroke-linejoin="round"/></svg>
</div></div>
<div class="r" style="left:0;top:653.5px;width:2922px;height:690.5px;overflow:hidden"><div class="r" style="left:0;top:-653.5px;width:2922px;height:1344px">
<div class="r" style="left:2197.90px;top:666.20px;width:665.00px;height:151.50px;background:#fff;border-radius:10px;border:1.5px solid #e5e7eb;box-sizing:border-box;"></div>
<div class="t" style="left:2217.50px;top:690.51px;font-size:21.9px;line-height:21.9px;font-weight:400;color:#0b0f19;letter-spacing:0px;-webkit-text-stroke:0.45px #0b0f19;">bop</div>
<div class="t" style="left:2217.00px;top:722.84px;font-size:19.0px;line-height:19.0px;font-weight:400;color:#6b7280;letter-spacing:0px;">Last modified:</div>
<div class="t" style="left:2217.00px;top:746.94px;font-size:19.0px;line-height:19.0px;font-weight:400;color:#6b7280;letter-spacing:0px;">May 09, 2025, 01:39 PM</div>
<div class="t" style="left:2217.00px;top:777.24px;font-size:19.0px;line-height:19.0px;font-weight:400;color:#6b7280;letter-spacing:0px;">Created: Kate MacFarlane</div>
<svg class="r" style="left:2823.30px;top:731.00px;" width="18" height="21" viewBox="0 0 18 21"><path d="M4.2 2.8 L11.9 10.5 L4.2 18.2" fill="none" stroke="#374151" stroke-width="1.8" stroke-linecap="round" stroke-linejoin="round"/></svg>
<div class="r" style="left:2197.90px;top:824.20px;width:665.00px;height:151.50px;background:#fff;border-radius:10px;border:1.5px solid #e5e7eb;box-sizing:border-box;border-left:6px solid #ea7a30;"></div>
<svg class="r" style="left:2530.90px;top:844.60px;" width="26" height="26" viewBox="0 0 26 26"><circle cx="13" cy="13" r="11" fill="none" stroke="#ea7a30" stroke-width="1.8"/><path d="M13 8.2 V13.8" stroke="#ea7a30" stroke-width="2" stroke-linecap="round"/><circle cx="13" cy="17.6" r="1.2" fill="#ea7a30"/></svg>
<div class="t" style="left:2222.10px;top:848.51px;font-size:21.9px;line-height:21.9px;font-weight:400;color:#0b0f19;letter-spacing:0px;-webkit-text-stroke:0.45px #0b0f19;">New Feat Button Experiment</div>
<div class="t" style="left:2221.60px;top:880.84px;font-size:19.0px;line-height:19.0px;font-weight:400;color:#6b7280;letter-spacing:0px;">Last modified:</div>
<div class="t" style="left:2221.60px;top:904.94px;font-size:19.0px;line-height:19.0px;font-weight:400;color:#6b7280;letter-spacing:0px;">Jan 15, 2025, 09:59 AM</div>
<div class="t" style="left:2221.60px;top:935.24px;font-size:19.0px;line-height:19.0px;font-weight:400;color:#6b7280;letter-spacing:0px;">Created: Kaushal Kapasi</div>
<svg class="r" style="left:2823.30px;top:889.00px;" width="18" height="21" viewBox="0 0 18 21"><path d="M4.2 2.8 L11.9 10.5 L4.2 18.2" fill="none" stroke="#374151" stroke-width="1.8" stroke-linecap="round" stroke-linejoin="round"/></svg>
<div class="r" style="left:2197.90px;top:982.20px;width:665.00px;height:151.50px;background:#fff;border-radius:10px;border:1.5px solid #e5e7eb;box-sizing:border-box;border-left:6px solid #ea7a30;"></div>
<svg class="r" style="left:2337.40px;top:1002.60px;" width="26" height="26" viewBox="0 0 26 26"><circle cx="13" cy="13" r="11" fill="none" stroke="#ea7a30" stroke-width="1.8"/><path d="M13 8.2 V13.8" stroke="#ea7a30" stroke-width="2" stroke-linecap="round"/><circle cx="13" cy="17.6" r="1.2" fill="#ea7a30"/></svg>
<div class="t" style="left:2222.10px;top:1006.51px;font-size:21.9px;line-height:21.9px;font-weight:400;color:#0b0f19;letter-spacing:0px;-webkit-text-stroke:0.45px #0b0f19;">tx-test-3</div>
<div class="t" style="left:2221.60px;top:1038.84px;font-size:19.0px;line-height:19.0px;font-weight:400;color:#6b7280;letter-spacing:0px;">Last modified:</div>
<div class="t" style="left:2221.60px;top:1062.93px;font-size:19.0px;line-height:19.0px;font-weight:400;color:#6b7280;letter-spacing:0px;">Nov 04, 2024, 08:44 AM</div>
<div class="t" style="left:2221.60px;top:1093.24px;font-size:19.0px;line-height:19.0px;font-weight:400;color:#6b7280;letter-spacing:0px;">Created: Unknown User</div>
<svg class="r" style="left:2823.30px;top:1047.00px;" width="18" height="21" viewBox="0 0 18 21"><path d="M4.2 2.8 L11.9 10.5 L4.2 18.2" fill="none" stroke="#374151" stroke-width="1.8" stroke-linecap="round" stroke-linejoin="round"/></svg>
<div class="r" style="left:2197.90px;top:1140.20px;width:665.00px;height:151.50px;background:#fff;border-radius:10px;border:1.5px solid #e5e7eb;box-sizing:border-box;border-left:6px solid #ea7a30;"></div>
<svg class="r" style="left:2337.40px;top:1160.60px;" width="26" height="26" viewBox="0 0 26 26"><circle cx="13" cy="13" r="11" fill="none" stroke="#ea7a30" stroke-width="1.8"/><path d="M13 8.2 V13.8" stroke="#ea7a30" stroke-width="2" stroke-linecap="round"/><circle cx="13" cy="17.6" r="1.2" fill="#ea7a30"/></svg>
<div class="t" style="left:2222.10px;top:1164.51px;font-size:21.9px;line-height:21.9px;font-weight:400;color:#0b0f19;letter-spacing:0px;-webkit-text-stroke:0.45px #0b0f19;">test-json</div>
<div class="t" style="left:2221.60px;top:1196.84px;font-size:19.0px;line-height:19.0px;font-weight:400;color:#6b7280;letter-spacing:0px;">Last modified:</div>
<div class="t" style="left:2221.60px;top:1220.93px;font-size:19.0px;line-height:19.0px;font-weight:400;color:#6b7280;letter-spacing:0px;">Nov 04, 2024, 08:44 AM</div>
<div class="t" style="left:2221.60px;top:1251.24px;font-size:19.0px;line-height:19.0px;font-weight:400;color:#6b7280;letter-spacing:0px;">Created: Parth Suthar</div>
<svg class="r" style="left:2823.30px;top:1205.00px;" width="18" height="21" viewBox="0 0 18 21"><path d="M4.2 2.8 L11.9 10.5 L4.2 18.2" fill="none" stroke="#374151" stroke-width="1.8" stroke-linecap="round" stroke-linejoin="round"/></svg>
<div class="r" style="left:2197.90px;top:1298.20px;width:665.00px;height:151.50px;background:#fff;border-radius:10px;border:1.5px solid #e5e7eb;box-sizing:border-box;border-left:6px solid #ea7a30;"></div>
<svg class="r" style="left:2357.20px;top:1318.60px;" width="26" height="26" viewBox="0 0 26 26"><circle cx="13" cy="13" r="11" fill="none" stroke="#ea7a30" stroke-width="1.8"/><path d="M13 8.2 V13.8" stroke="#ea7a30" stroke-width="2" stroke-linecap="round"/><circle cx="13" cy="17.6" r="1.2" fill="#ea7a30"/></svg>
<div class="t" style="left:2222.10px;top:1322.51px;font-size:21.9px;line-height:21.9px;font-weight:400;color:#0b0f19;letter-spacing:0px;-webkit-text-stroke:0.45px #0b0f19;">rachel-test</div>
<div class="t" style="left:2221.60px;top:1354.84px;font-size:19.0px;line-height:19.0px;font-weight:400;color:#6b7280;letter-spacing:0px;">Last modified:</div>
<div class="t" style="left:2221.60px;top:1378.93px;font-size:19.0px;line-height:19.0px;font-weight:400;color:#6b7280;letter-spacing:0px;">Nov 01, 2024, 10:12 AM</div>
<div class="t" style="left:2221.60px;top:1409.24px;font-size:19.0px;line-height:19.0px;font-weight:400;color:#6b7280;letter-spacing:0px;">Created: Parth Suthar</div>
<svg class="r" style="left:2823.30px;top:1363.00px;" width="18" height="21" viewBox="0 0 18 21"><path d="M4.2 2.8 L11.9 10.5 L4.2 18.2" fill="none" stroke="#374151" stroke-width="1.8" stroke-linecap="round" stroke-linejoin="round"/></svg>
</div></div>
<div class="r" style="left:419.00px;top:646.50px;width:287.00px;height:231.00px;background:#fff;border-radius:10px;border:1px solid #e6e8eb;box-sizing:border-box;box-shadow:0 10px 15px -3px rgba(0,0,0,0.10),0 4px 6px -4px rgba(0,0,0,0.08);"></div>
<div class="r" style="left:420.00px;top:654.00px;width:285.00px;height:53.50px;background:#eff4fe;border-radius:0px;"></div>
<div class="t" style="left:437.00px;top:670.63px;font-size:22px;line-height:22px;font-weight:400;color:#2a4fcf;letter-spacing:0px;">Last Updated (Newest)</div>
<svg class="r" style="left:669.00px;top:672.00px;" width="18" height="18" viewBox="0 0 18 18"><path d="M3.2 9.6 L7.2 13.6 L15 4.6" fill="none" stroke="#2a4fcf" stroke-width="1.8" stroke-linecap="round" stroke-linejoin="round"/></svg>
<div class="t" style="left:437.00px;top:725.03px;font-size:22px;line-height:22px;font-weight:400;color:#374151;letter-spacing:0px;">Last Updated (Oldest)</div>
<div class="t" style="left:437.00px;top:779.23px;font-size:22px;line-height:22px;font-weight:400;color:#374151;letter-spacing:0px;">Name (A-Z)</div>
<div class="t" style="left:437.00px;top:833.43px;font-size:22px;line-height:22px;font-weight:400;color:#374151;letter-spacing:0px;">Name (Z-A)</div>
</body></html>
